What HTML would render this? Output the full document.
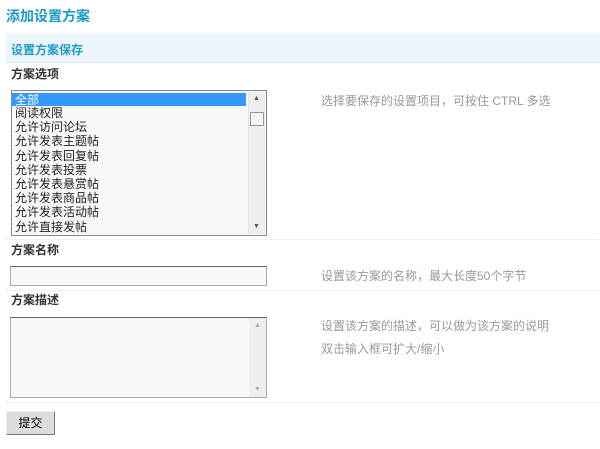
<!DOCTYPE html>
<html><head><meta charset="utf-8"><style>
*{margin:0;padding:0;box-sizing:border-box}
body{width:600px;height:449px;background:#fff;font-family:"Liberation Sans","Noto Sans CJK SC",sans-serif;font-size:12px;position:relative;overflow:hidden}
.a{position:absolute;white-space:nowrap;line-height:14px}
.t{left:6px;top:7px;font-size:14px;font-weight:bold;color:#1b9ac9;line-height:18px}
.band{position:absolute;left:6px;top:33px;width:594px;height:30px;background:#eef6fd;border-bottom:1px dotted #cfe3f1}
.band span{position:absolute;left:5px;top:8px;font-weight:bold;color:#1b9ac9}
.lb{font-weight:bold;color:#333}
.h{color:#999;left:321px}
.line{position:absolute;left:6px;width:594px;border-top:1px dotted #d8e8f4;height:0}
.sel{position:absolute;left:11px;top:90px;width:256px;height:146px;border:1px solid #888;background:#f8f8f8}
.r{height:14.2px;line-height:14px;padding-left:3px;color:#222;font-size:12px;width:234px;white-space:nowrap}
.sb{position:absolute;right:1px;top:1px;width:17px;height:142px;background:#eee;border-left:1px solid #e4e4e4}
.inp{position:absolute;left:10px;top:266px;width:257px;height:20px;border:1px solid #aaa;border-top-color:#666;background:#f8f8f8}
.ta{position:absolute;left:10px;top:317px;width:257px;height:81px;border:1px solid #aaa;border-top-color:#666;background:#f8f8f8}
.btn{position:absolute;left:6px;top:411px;width:49px;height:24px;background:#ddd;border:1px solid #eee;border-right-color:#777;border-bottom-color:#777;text-align:center;line-height:22px;font-size:12px;color:#000}
</style></head><body>
<div class="a t">添加设置方案</div>
<div class="band"><span>设置方案保存</span></div>
<div class="a lb" style="left:11px;top:67px">方案选项</div>
<div class="sel">
<div class="r" style="background:#3399ff;color:#fff;margin-top:2px;height:13px">全部</div>
<div class="r">阅读权限</div><div class="r">允许访问论坛</div><div class="r">允许发表主题帖</div><div class="r">允许发表回复帖</div><div class="r">允许发表投票</div><div class="r">允许发表悬赏帖</div><div class="r">允许发表商品帖</div><div class="r">允许发表活动帖</div><div class="r">允许直接发帖</div>
<div class="sb"><span style="position:absolute;top:3px;left:4px;font-size:7px;color:#555;line-height:8px">▲</span><span style="position:absolute;top:20px;left:1px;width:14px;height:14px;border:1px solid #999;background:#f4f4f4"></span><span style="position:absolute;bottom:3px;left:4px;font-size:7px;color:#555;line-height:8px">▼</span></div>
</div>
<div class="a h" style="top:94px">选择要保存的设置项目，可按住 CTRL 多选</div>
<div class="line" style="top:239px"></div>
<div class="a lb" style="left:11px;top:243px">方案名称</div>
<div class="inp"></div>
<div class="a h" style="top:269px">设置该方案的名称，最大长度50个字节</div>
<div class="line" style="top:290px"></div>
<div class="a lb" style="left:11px;top:293px">方案描述</div>
<div class="ta"><div style="position:absolute;right:0;top:0;width:17px;height:79px;background:#eee"><div style="position:absolute;top:4px;left:5px;font-size:7px;color:#aaa">▲</div><div style="position:absolute;bottom:4px;left:5px;font-size:7px;color:#aaa">▼</div></div></div>
<div class="a h" style="top:319px">设置该方案的描述，可以做为该方案的说明</div>
<div class="a h" style="top:342px">双击输入框可扩大/缩小</div>
<div class="line" style="top:402px"></div>
<div class="btn">提交</div>
</body></html>
